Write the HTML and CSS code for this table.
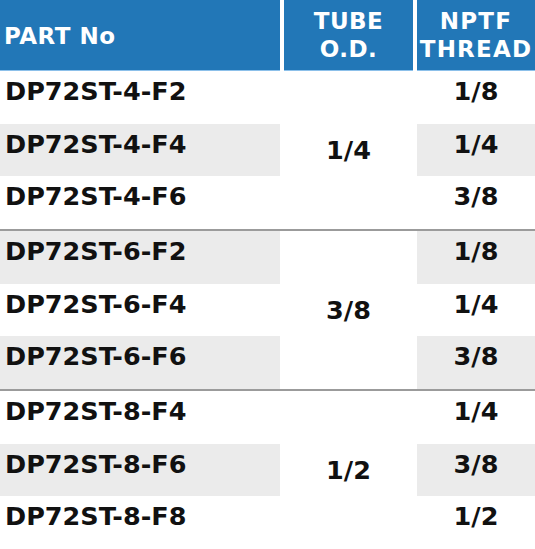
FILE: index.html
```html
<!DOCTYPE html>
<html>
<head>
<meta charset="utf-8">
<link rel="stylesheet" href="styles.css">
</head>
<body>
<div class="table">
  <div class="head">
    <div class="th th-part">PART No</div>
    <div class="th th-tube">TUBE<br>O.D.</div>
    <div class="th th-thread">NPTF<br>THREAD</div>
  </div>
  <div class="group">
    <div class="td part">DP72ST-4-F2</div>
    <div class="td size">1/4</div>
    <div class="td thread">1/8</div>
    <div class="td part alt">DP72ST-4-F4</div>
    <div class="td thread alt">1/4</div>
    <div class="td part">DP72ST-4-F6</div>
    <div class="td thread">3/8</div>
  </div>
  <div class="group">
    <div class="td part alt">DP72ST-6-F2</div>
    <div class="td size">3/8</div>
    <div class="td thread alt">1/8</div>
    <div class="td part">DP72ST-6-F4</div>
    <div class="td thread">1/4</div>
    <div class="td part alt">DP72ST-6-F6</div>
    <div class="td thread alt">3/8</div>
  </div>
  <div class="group last">
    <div class="td part">DP72ST-8-F4</div>
    <div class="td size">1/2</div>
    <div class="td thread">1/4</div>
    <div class="td part alt">DP72ST-8-F6</div>
    <div class="td thread alt">3/8</div>
    <div class="td part">DP72ST-8-F8</div>
    <div class="td thread">1/2</div>
  </div>
</div>
</body>
</html>
```
FILE: styles.css
```css
html, body {
  margin: 0;
  padding: 0;
  background: #ffffff;
}
.table {
  width: 535px;
  font-family: "DejaVu Sans", "Noto Sans", sans-serif;
  color: #111111;
}
.head {
  display: grid;
  grid-template-columns: 280px 137px 118px;
  height: 71px;
}
.th {
  background: #2277b7;
  border-bottom: 1px solid #8cc0ea;
  color: #ffffff;
  font-weight: 700;
  font-size: 23px;
  line-height: 28px;
  display: flex;
  align-items: center;
  letter-spacing: 0.5px;
}
.th-part {
  padding-left: 4px;
  padding-top: 1px;
}
.th-tube {
  margin: 0 4px;
  justify-content: center;
  text-align: center;
}
.th-thread {
  justify-content: center;
  text-align: center;
  letter-spacing: 1.2px;
}
.group {
  display: grid;
  grid-template-columns: 280px 137px 118px;
  grid-template-rows: repeat(3, 52.667px);
  border-bottom: 2px solid #9b9b9b;
}
.group.last {
  border-bottom: none;
}
.td {
  font-size: 25.5px;
  font-weight: 700;
  line-height: 28px;
  padding-top: 6px;
  box-sizing: border-box;
}
.part {
  grid-column: 1;
  padding-left: 5px;
}
.size {
  grid-column: 2;
  grid-row: 1 / span 3;
  display: flex;
  align-items: center;
  justify-content: center;
  padding-top: 0;
}
.thread {
  grid-column: 3;
  text-align: center;
}
.alt {
  background: #ebebeb;
}
```
